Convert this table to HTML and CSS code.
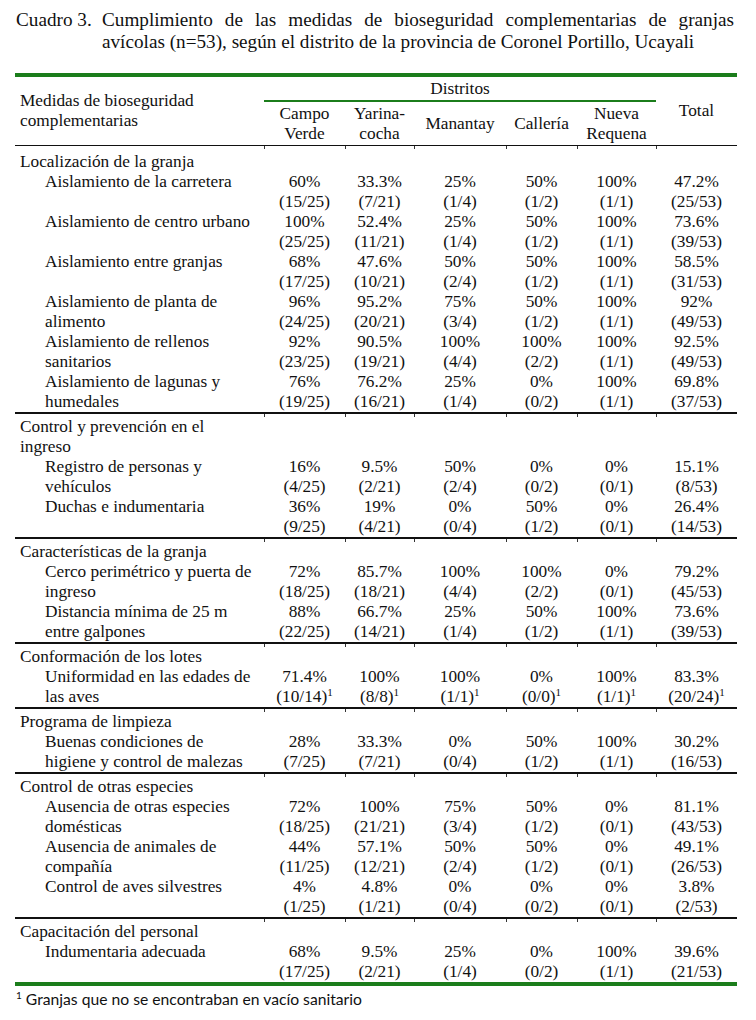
FILE: index.html
```html
<!DOCTYPE html>
<html lang="es">
<head>
<meta charset="utf-8">
<title>Cuadro 3</title>
<link rel="stylesheet" href="styles.css">
</head>
<body>
<div class="page">
  <div class="caption">
    <div class="cap-num">Cuadro 3.</div>
    <div class="cap-text">
      <div class="cap-line1">Cumplimiento de las medidas de bioseguridad complementarias de granjas</div>
      <div>avícolas (n=53), según el distrito de la provincia de Coronel Portillo, Ucayali</div>
    </div>
  </div>

  <table class="tbl">
    <colgroup>
      <col class="c-label"><col class="c-cv"><col class="c-ya"><col class="c-ma"><col class="c-ca"><col class="c-nr"><col class="c-to">
    </colgroup>
    <thead>
      <tr>
        <th rowspan="2" class="h-label">Medidas de bioseguridad<br>complementarias</th>
        <th colspan="5" class="h-group">Distritos</th>
        <th rowspan="2" class="h-total">Total</th>
      </tr>
      <tr class="h-sub">
        <th>Campo<br>Verde</th>
        <th>Yarina-<br>cocha</th>
        <th>Manantay</th>
        <th>Callería</th>
        <th>Nueva<br>Requena</th>
      </tr>
    </thead>

    <tbody>
      <tr class="sec first"><td colspan="7">Localización de la granja</td></tr>
      <tr><td class="item">Aislamiento de la carretera</td><td class="v">60%<br>(15/25)</td><td class="v">33.3%<br>(7/21)</td><td class="v">25%<br>(1/4)</td><td class="v">50%<br>(1/2)</td><td class="v">100%<br>(1/1)</td><td class="v">47.2%<br>(25/53)</td></tr>
      <tr><td class="item">Aislamiento de centro urbano</td><td class="v">100%<br>(25/25)</td><td class="v">52.4%<br>(11/21)</td><td class="v">25%<br>(1/4)</td><td class="v">50%<br>(1/2)</td><td class="v">100%<br>(1/1)</td><td class="v">73.6%<br>(39/53)</td></tr>
      <tr><td class="item">Aislamiento entre granjas</td><td class="v">68%<br>(17/25)</td><td class="v">47.6%<br>(10/21)</td><td class="v">50%<br>(2/4)</td><td class="v">50%<br>(1/2)</td><td class="v">100%<br>(1/1)</td><td class="v">58.5%<br>(31/53)</td></tr>
      <tr><td class="item">Aislamiento de planta de<br>alimento</td><td class="v">96%<br>(24/25)</td><td class="v">95.2%<br>(20/21)</td><td class="v">75%<br>(3/4)</td><td class="v">50%<br>(1/2)</td><td class="v">100%<br>(1/1)</td><td class="v">92%<br>(49/53)</td></tr>
      <tr><td class="item">Aislamiento de rellenos<br>sanitarios</td><td class="v">92%<br>(23/25)</td><td class="v">90.5%<br>(19/21)</td><td class="v">100%<br>(4/4)</td><td class="v">100%<br>(2/2)</td><td class="v">100%<br>(1/1)</td><td class="v">92.5%<br>(49/53)</td></tr>
      <tr><td class="item">Aislamiento de lagunas y<br>humedales</td><td class="v">76%<br>(19/25)</td><td class="v">76.2%<br>(16/21)</td><td class="v">25%<br>(1/4)</td><td class="v">0%<br>(0/2)</td><td class="v">100%<br>(1/1)</td><td class="v">69.8%<br>(37/53)</td></tr>
    </tbody>

    <tbody>
      <tr class="sec"><td colspan="7">Control y prevención en el<br>ingreso</td></tr>
      <tr><td class="item">Registro de personas y<br>vehículos</td><td class="v">16%<br>(4/25)</td><td class="v">9.5%<br>(2/21)</td><td class="v">50%<br>(2/4)</td><td class="v">0%<br>(0/2)</td><td class="v">0%<br>(0/1)</td><td class="v">15.1%<br>(8/53)</td></tr>
      <tr><td class="item">Duchas e indumentaria</td><td class="v">36%<br>(9/25)</td><td class="v">19%<br>(4/21)</td><td class="v">0%<br>(0/4)</td><td class="v">50%<br>(1/2)</td><td class="v">0%<br>(0/1)</td><td class="v">26.4%<br>(14/53)</td></tr>
    </tbody>

    <tbody>
      <tr class="sec"><td colspan="7">Características de la granja</td></tr>
      <tr><td class="item">Cerco perimétrico y puerta de<br>ingreso</td><td class="v">72%<br>(18/25)</td><td class="v">85.7%<br>(18/21)</td><td class="v">100%<br>(4/4)</td><td class="v">100%<br>(2/2)</td><td class="v">0%<br>(0/1)</td><td class="v">79.2%<br>(45/53)</td></tr>
      <tr><td class="item">Distancia mínima de 25 m<br>entre galpones</td><td class="v">88%<br>(22/25)</td><td class="v">66.7%<br>(14/21)</td><td class="v">25%<br>(1/4)</td><td class="v">50%<br>(1/2)</td><td class="v">100%<br>(1/1)</td><td class="v">73.6%<br>(39/53)</td></tr>
    </tbody>

    <tbody>
      <tr class="sec"><td colspan="7">Conformación de los lotes</td></tr>
      <tr><td class="item">Uniformidad en las edades de<br>las aves</td><td class="v">71.4%<br>(10/14)<sup>1</sup></td><td class="v">100%<br>(8/8)<sup>1</sup></td><td class="v">100%<br>(1/1)<sup>1</sup></td><td class="v">0%<br>(0/0)<sup>1</sup></td><td class="v">100%<br>(1/1)<sup>1</sup></td><td class="v">83.3%<br>(20/24)<sup>1</sup></td></tr>
    </tbody>

    <tbody>
      <tr class="sec"><td colspan="7">Programa de limpieza</td></tr>
      <tr><td class="item">Buenas condiciones de<br>higiene y control de malezas</td><td class="v">28%<br>(7/25)</td><td class="v">33.3%<br>(7/21)</td><td class="v">0%<br>(0/4)</td><td class="v">50%<br>(1/2)</td><td class="v">100%<br>(1/1)</td><td class="v">30.2%<br>(16/53)</td></tr>
    </tbody>

    <tbody>
      <tr class="sec"><td colspan="7">Control de otras especies</td></tr>
      <tr><td class="item">Ausencia de otras especies<br>domésticas</td><td class="v">72%<br>(18/25)</td><td class="v">100%<br>(21/21)</td><td class="v">75%<br>(3/4)</td><td class="v">50%<br>(1/2)</td><td class="v">0%<br>(0/1)</td><td class="v">81.1%<br>(43/53)</td></tr>
      <tr><td class="item">Ausencia de animales de<br>compañía</td><td class="v">44%<br>(11/25)</td><td class="v">57.1%<br>(12/21)</td><td class="v">50%<br>(2/4)</td><td class="v">50%<br>(1/2)</td><td class="v">0%<br>(0/1)</td><td class="v">49.1%<br>(26/53)</td></tr>
      <tr><td class="item">Control de aves silvestres</td><td class="v">4%<br>(1/25)</td><td class="v">4.8%<br>(1/21)</td><td class="v">0%<br>(0/4)</td><td class="v">0%<br>(0/2)</td><td class="v">0%<br>(0/1)</td><td class="v">3.8%<br>(2/53)</td></tr>
    </tbody>

    <tbody>
      <tr class="sec"><td colspan="7">Capacitación del personal</td></tr>
      <tr><td class="item">Indumentaria adecuada</td><td class="v">68%<br>(17/25)</td><td class="v">9.5%<br>(2/21)</td><td class="v">25%<br>(1/4)</td><td class="v">0%<br>(0/2)</td><td class="v">100%<br>(1/1)</td><td class="v">39.6%<br>(21/53)</td></tr>
    </tbody>
  </table>

  <p class="note"><sup>1</sup> Granjas que no se encontraban en vacío sanitario</p>
</div>
</body>
</html>
```

FILE: styles.css
```css
html, body {
  margin: 0;
  background: #ffffff;
}

body {
  color: #111111;
  font-family: "Liberation Serif", "Times New Roman", serif;
}

.page {
  width: 722px;
  padding: 9px 0 0 15px;
}

/* Caption */
.caption {
  display: flex;
  margin-left: 1px;
  font-size: 19.2px;
  line-height: 22px;
}

.cap-num {
  flex: none;
  width: 86px;
}

.cap-text {
  width: 632px;
}

.cap-line1 {
  text-align: justify;
  text-align-last: justify;
}

/* Table */
.tbl {
  margin-top: 20px;
  width: 722px;
  table-layout: fixed;
  border-collapse: separate;
  border-spacing: 0;
  border-top: 4px solid #1b7d1b;
  border-bottom: 4px solid #1b7d1b;
  font-size: 17.3px;
  line-height: 20px;
}

.c-label { width: 249px; }
.c-cv { width: 81px; }
.c-ya { width: 69px; }
.c-ma { width: 92px; }
.c-ca { width: 71px; }
.c-nr { width: 79px; }
.c-to { width: 81px; }

.tbl th,
.tbl td {
  padding: 0;
  font-weight: normal;
}

.tbl th {
  text-align: center;
  vertical-align: middle;
}

.tbl th.h-label {
  text-align: left;
  padding-left: 5px;
  border-bottom: 1px solid #111111;
}

.tbl th.h-group {
  padding: 2px 0 1px;
  border-bottom: 2px solid #1b7d1b;
}

.tbl th.h-total {
  border-bottom: 1px solid #111111;
}

.h-sub th {
  padding: 2px 0 1px;
  border-bottom: 1px solid #111111;
}

/* Section title rows */
.sec td {
  text-align: left;
  padding: 3px 0 0 5px;
  border-top: 2px solid #111111;
  white-space: nowrap;
  background-image:
    linear-gradient(#333, #333),
    linear-gradient(#333, #333),
    linear-gradient(#333, #333),
    linear-gradient(#333, #333),
    linear-gradient(#333, #333),
    linear-gradient(#333, #333);
  background-repeat: no-repeat;
  background-size: 1px 3px;
  background-position: 249px 0, 330px 0, 399px 0, 491px 0, 562px 0, 641px 0;
}

.sec.first td {
  border-top: 0;
  padding-top: 6px;
}

/* Item rows */
.tbl td.item {
  padding-left: 30px;
  white-space: nowrap;
  vertical-align: top;
  text-align: left;
}

.tbl td.v {
  text-align: center;
  vertical-align: top;
  white-space: nowrap;
}

sup {
  font-size: 11px;
  line-height: 0;
  vertical-align: 6px;
}

/* Footnote */
.note {
  margin: 3px 0 0 1px;
  font-family: Lato, "Open Sans", "Liberation Sans", sans-serif;
  font-size: 15.7px;
  line-height: 20px;
  color: #111111;
}

.note sup {
  font-size: 10px;
  vertical-align: 6px;
}
```
